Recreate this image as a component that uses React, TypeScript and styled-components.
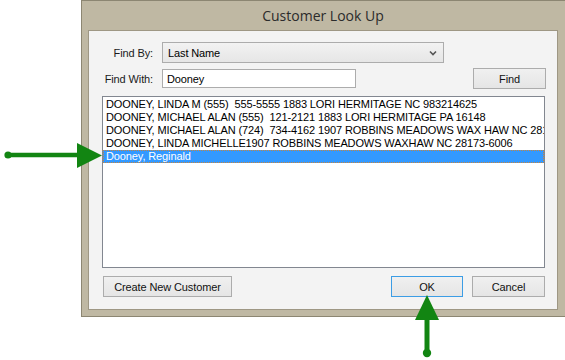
import styled, { createGlobalStyle } from 'styled-components'

const GlobalStyle = createGlobalStyle`
  html, body {
    margin: 0;
    padding: 0;
    background: #fff;
  }
  body {
    font-family: 'Liberation Sans', Arial, sans-serif;
    font-size: 11px;
    letter-spacing: -0.12px;
    color: #000;
  }
`

const Stage = styled.div`
  position: relative;
  width: 565px;
  height: 360px;
  overflow: hidden;
`

const Window = styled.div`
  margin-left: 81px;
  width: 484px;
  height: 317px;
  box-sizing: border-box;
  background: #bfb8a3;
  border: 1px solid #8c8672;
  border-right: none;
  padding: 0 7px 6px 6px;
  display: flex;
  flex-direction: column;
`

const TitleBar = styled.div`
  height: 29px;
  display: flex;
  align-items: center;
  justify-content: center;
  font-family: 'Open Sans', 'Noto Sans', sans-serif;
  font-size: 14px;
  letter-spacing: 0;
  color: #2b2b2b;
  padding-bottom: 1px;
`

const Client = styled.div`
  flex: 1;
  background: #f3f3f3;
  border: 1px solid #9e9784;
  padding: 11px 11px 12px 13px;
  display: flex;
  flex-direction: column;
`

const FieldRow = styled.div<{ $top?: number }>`
  display: flex;
  align-items: center;
  margin-top: ${({ $top }) => $top ?? 0}px;
`

const Label = styled.label`
  width: 51px;
  margin-right: 9px;
  text-align: right;
  white-space: nowrap;
  color: #1a1a1a;
`

const Select = styled.div`
  width: 282px;
  height: 21px;
  box-sizing: border-box;
  border: 1px solid #acacac;
  background: linear-gradient(#f2f2f2, #e6e6e6);
  display: flex;
  align-items: center;
  justify-content: space-between;
  padding: 0 6px 0 5px;
`

const Input = styled.div`
  width: 194px;
  height: 19px;
  box-sizing: border-box;
  border: 1px solid #acacac;
  background: #fff;
  display: flex;
  align-items: center;
  padding-left: 4px;
`

const Button = styled.div<{ $width: number; $focused?: boolean }>`
  width: ${({ $width }) => $width}px;
  height: 21px;
  box-sizing: border-box;
  border: 1px solid ${({ $focused }) => ($focused ? '#3c9de5' : '#acacac')};
  background: linear-gradient(#f0f0f0, #e5e5e5);
  display: flex;
  align-items: center;
  justify-content: center;
  color: #111;
`

const Spacer = styled.div`
  flex: 1;
`

const List = styled.div`
  margin-top: 7px;
  width: 443px;
  height: 172px;
  box-sizing: border-box;
  border: 1px solid #828790;
  background: #fff;
  padding-top: 1px;
  overflow: hidden;
`

const ListItem = styled.div<{ $selected?: boolean }>`
  height: 13px;
  line-height: 13px;
  box-sizing: border-box;
  padding-left: 3px;
  white-space: pre;
  overflow: hidden;
  color: ${({ $selected }) => ($selected ? '#fff' : '#000')};
  background: ${({ $selected }) => ($selected ? '#3399ff' : 'transparent')};
  outline: ${({ $selected }) => ($selected ? '1px dotted #c8843c' : 'none')};
  outline-offset: -1px;
`

const ButtonRow = styled.div`
  margin-top: 8px;
  display: flex;
  gap: 9px;
  width: 443px;
  padding-left: 1px;
  box-sizing: border-box;
`

const Overlay = styled.svg`
  position: absolute;
  left: 0;
  top: 0;
  pointer-events: none;
`

const rows = [
  'DOONEY, LINDA M (555)  555-5555 1883 LORI HERMITAGE NC 983214625',
  'DOONEY, MICHAEL ALAN (555)  121-2121 1883 LORI HERMITAGE PA 16148',
  'DOONEY, MICHAEL ALAN (724)  734-4162 1907 ROBBINS MEADOWS WAX HAW NC 28173',
  'DOONEY, LINDA MICHELLE1907 ROBBINS MEADOWS WAXHAW NC 28173-6006',
  'Dooney, Reginald',
]

const GREEN = '#128512'

const App = () => {
  return (
    <Stage>
      <GlobalStyle />
      <Window>
        <TitleBar>Customer Look Up</TitleBar>
        <Client>
          <FieldRow>
            <Label>Find By:</Label>
            <Select>
              <span>Last Name</span>
              <svg width="8" height="6" viewBox="0 0 8 6">
                <path d="M1 1.5 L4 4.5 L7 1.5" fill="none" stroke="#555" strokeWidth="1.6" />
              </svg>
            </Select>
          </FieldRow>
          <FieldRow $top={5}>
            <Label>Find With:</Label>
            <Input>Dooney</Input>
            <Spacer />
            <Button $width={73}>Find</Button>
          </FieldRow>
          <List>
            {rows.map((r, i) => (
              <ListItem key={i} $selected={i === rows.length - 1}>
                {r}
              </ListItem>
            ))}
          </List>
          <ButtonRow>
            <Button $width={129}>Create New Customer</Button>
            <Spacer />
            <Button $width={72} $focused>
              OK
            </Button>
            <Button $width={73}>Cancel</Button>
          </ButtonRow>
        </Client>
      </Window>
      <Overlay width="565" height="360" viewBox="0 0 565 360">
        <circle cx="8" cy="155" r="3.6" fill={GREEN} />
        <line x1="8" y1="155" x2="80" y2="155" stroke={GREEN} strokeWidth="4.5" />
        <polygon points="77,143 102,155.5 77,168" fill={GREEN} />
        <polygon points="415,320 427,295 439,320" fill={GREEN} />
        <line x1="427" y1="318" x2="427" y2="353" stroke={GREEN} strokeWidth="5" />
        <circle cx="427" cy="353" r="4.2" fill={GREEN} />
      </Overlay>
    </Stage>
  )
}

export default App
